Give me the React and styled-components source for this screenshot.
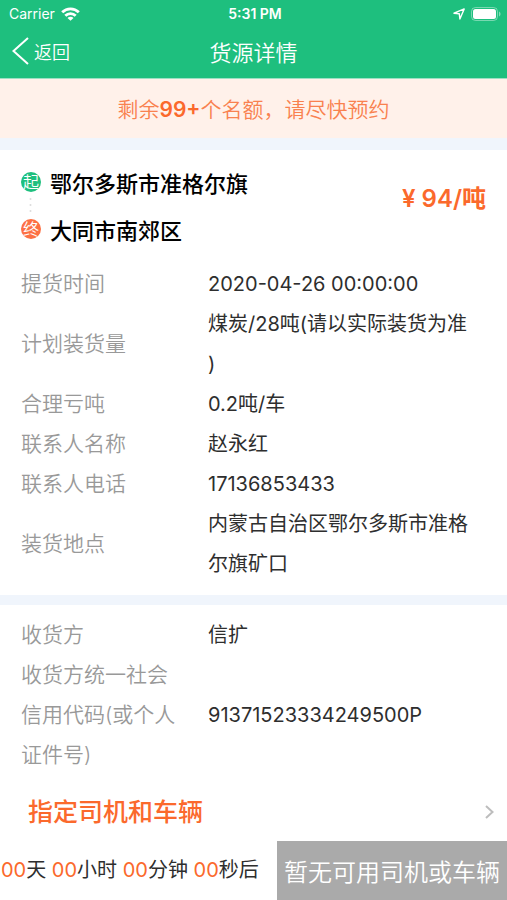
import React from "react";
import styled, { createGlobalStyle } from "styled-components";

const green = "#1ebf7e";
const orange = "#fb692c";
const white = "#fff";
const PADDING = 21;

const GlobalStyle = createGlobalStyle`
    * {
        box-sizing: border-box;
    }
    body {
        margin: 0;
        background: ${white};
        color: #2e2e2e;
        font-family: Inter, "Noto Sans CJK SC", sans-serif;
        font-size: 20px;
    }
`;

const Page = styled.div`
    min-height: 100vh;
    display: flex;
    flex-direction: column;
`;

const Header = styled.header`
    background: ${green};
    color: ${white};
    height: 79px;
    border-bottom: 1px solid #9ee0c4;
`;

const StatusBar = styled.div`
    display: grid;
    grid-template-columns: 1fr auto 1fr;
    align-items: center;
    height: 28px;
    padding: 0 6px 0 9px;
    font-size: 14px;
    line-height: 28px;
`;

const StatusSide = styled.div`
    display: flex;
    align-items: center;
    justify-content: ${props => props.$end ? "flex-end" : "flex-start"};
    gap: 6px;
`;

const Clock = styled.span`
    font-weight: 600;
`;

const NavBar = styled.div`
    display: grid;
    grid-template-columns: 1fr auto 1fr;
    align-items: center;
    height: 46px;
    padding: 0 12px;
`;

const BackButton = styled.button`
    display: flex;
    align-items: center;
    justify-self: start;
    gap: 5px;
    padding: 0;
    border: 0;
    background: none;
    color: ${white};
    font: inherit;
    font-size: 18px;
    font-weight: 350;
    cursor: pointer;
`;

const Title = styled.h1`
    margin: 0;
    font-size: 22px;
    font-weight: 350;
`;

const Notice = styled.p`
    margin: 0;
    padding-top: 2px;
    background: #fff1ea;
    color: #f9814f;
    font-size: 21px;
    font-weight: 350;
    line-height: 57px;
    text-align: center;
    b {
        color: ${orange};
        font-weight: 600;
    }
`;

const Divider = styled.div`
    height: ${props => props.$tall ? 12 : 10}px;
    background: #f0f5fc;
`;

const Summary = styled.section`
    display: flex;
    align-items: flex-start;
    justify-content: space-between;
    padding: 8px ${PADDING}px 12px;
`;

const Stop = styled.div`
    display: flex;
    align-items: center;
    gap: 9px;
    height: 47px;
    color: #000;
    font-size: 22px;
    font-weight: 500;
`;

const Badge = styled.span`
    display: flex;
    align-items: center;
    justify-content: center;
    width: 20px;
    height: 20px;
    border-radius: 50%;
    background: ${props => props.color};
    color: ${white};
    font-size: 16px;
    font-weight: 350;
    line-height: 18px;
`;

const Route = styled.div`
    position: relative;
`;

//dots joining the two badges
const Dots = styled.svg`
    position: absolute;
    left: 8px;
    top: 39px;
`;

const Price = styled.strong`
    margin-top: 23px;
    color: ${orange};
    font-size: 24px;
    font-weight: 600;
    line-height: 36px;
`;

const Details = styled.dl`
    margin: 0;
    padding: ${props => props.$last ? "10px 36px 8px 21px" : "0 36px 11px 21px"};
    line-height: 40px;
`;

const Row = styled.div`
    display: grid;
    grid-template-columns: 160px 1fr;
    column-gap: 27px;
    align-items: center;
`;

const Label = styled.dt`
    color: #999;
    font-size: 21px;
    font-weight: 350;
    line-break: anywhere;
`;

const Value = styled.dd`
    margin: 0;
    line-break: anywhere;
`;

const AssignLink = styled.a`
    display: flex;
    align-items: center;
    justify-content: space-between;
    height: 58px;
    padding: 0 12px 0 28px;
    color: ${orange};
    font-size: 25px;
    font-weight: 500;
    line-height: 36px;
    text-decoration: none;
`;

const Footer = styled.footer`
    display: flex;
    height: 59px;
    margin-top: auto;
`;

const Countdown = styled.div`
    flex: 1;
    padding-left: 1px;
    line-height: 59px;
    white-space: nowrap;
    span {
        color: ${orange};
    }
`;

const SubmitButton = styled.button`
    padding: 0 7px;
    border: 0;
    background: #aaa;
    color: ${white};
    font: inherit;
    font-size: 24px;
    font-weight: 350;
    white-space: nowrap;
`;

const cargo = [
    ["提货时间", "2020-04-26 00:00:00"],
    ["计划装货量", "煤炭/28吨(请以实际装货为准)"],
    ["合理亏吨", "0.2吨/车"],
    ["联系人名称", "赵永红"],
    ["联系人电话", "17136853433"],
    ["装货地点", "内蒙古自治区鄂尔多斯市准格尔旗矿口"],
];

const receiver = [
    ["收货方", "信扩"],
    ["收货方统一社会信用代码(或个人证件号)", "91371523334249500P"],
];

const DetailList = ({ rows, last }) => (
    <Details $last={last}>
        {rows.map(([label, value]) => (
            <Row key={label}>
                <Label>{label}</Label>
                <Value>{value}</Value>
            </Row>
        ))}
    </Details>
);

const WifiIcon = () => (
    <svg width="19" height="14" viewBox="0 0 19 14" fill="none" stroke={white} strokeWidth="2.8" aria-hidden="true">
        <path d="M1.2 5.2a11.8 11.8 0 0 1 16.6 0" />
        <path d="M4.3 8.7a7.4 7.4 0 0 1 10.4 0" />
        <path d="M9.5 13.8 6.5 10.9a4.2 4.2 0 0 1 6 0z" fill={white} stroke="none" />
    </svg>
);

const LocationIcon = () => (
    <svg width="12" height="12" viewBox="0 0 12 12" fill="none" stroke={white} strokeWidth="1.4" strokeLinejoin="round" aria-hidden="true">
        <path d="M11.2 .9 6.9 11 6.3 5.8 1 5.2z" />
    </svg>
);

const BatteryIcon = () => (
    <svg width="30" height="14" viewBox="0 0 30 14" aria-hidden="true">
        <rect x=".5" y=".5" width="26" height="13" rx="4" fill="none" stroke={white} strokeOpacity=".4" />
        <rect x="2" y="2" width="23" height="10" rx="2.5" fill={white} />
        <path d="M28 4.5c2 .8 2 4.2 0 5z" fill={white} fillOpacity=".45" />
    </svg>
);

export default function App() {
    return (
        <Page>
            <GlobalStyle />
            <Header>
                <StatusBar>
                    <StatusSide>
                        Carrier
                        <WifiIcon />
                    </StatusSide>
                    <Clock>5:31 PM</Clock>
                    <StatusSide $end>
                        <LocationIcon />
                        <BatteryIcon />
                    </StatusSide>
                </StatusBar>
                <NavBar>
                    <BackButton type="button">
                        <svg width="17" height="28" viewBox="0 0 17 28" fill="none" stroke={white} strokeWidth="2" aria-hidden="true">
                            <path d="M16 1 1.5 14 16 27" />
                        </svg>
                        返回
                    </BackButton>
                    <Title>货源详情</Title>
                </NavBar>
            </Header>
            <Notice>剩余<b>99+</b>个名额，请尽快预约</Notice>
            <Divider $tall />
            <Summary>
                <Route>
                    <Stop><Badge color={green}>起</Badge>鄂尔多斯市准格尔旗</Stop>
                    <Dots width="3" height="16" viewBox="0 0 3 16" fill="#dcdcdc" aria-hidden="true">
                        <circle cx="1.5" cy="2" r="1" />
                        <circle cx="1.5" cy="8" r="1" />
                        <circle cx="1.5" cy="14" r="1" />
                    </Dots>
                    <Stop><Badge color="#fd7043">终</Badge>大同市南郊区</Stop>
                </Route>
                <Price>¥ 94/吨</Price>
            </Summary>
            <DetailList rows={cargo} />
            <Divider />
            <DetailList rows={receiver} last />
            <AssignLink href="#assign">
                指定司机和车辆
                <svg width="12" height="16" viewBox="0 0 12 16" fill="none" stroke="#bdbdbd" strokeWidth="2" aria-hidden="true">
                    <path d="M3 2 9.5 8 3 14" />
                </svg>
            </AssignLink>
            <Footer>
                <Countdown>
                    <span>00</span>天 <span>00</span>小时 <span>00</span>分钟 <span>00</span>秒后
                </Countdown>
                <SubmitButton type="button" disabled>暂无可用司机或车辆</SubmitButton>
            </Footer>
        </Page>
    );
}
